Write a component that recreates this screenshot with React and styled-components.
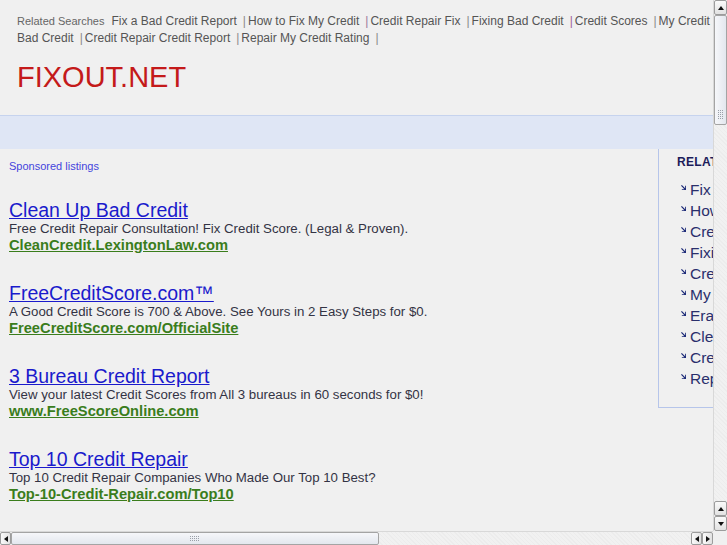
import styled, { createGlobalStyle } from "styled-components";

const GlobalStyle = createGlobalStyle`
  html, body {
    margin: 0;
    padding: 0;
    overflow: hidden;
    background: #f0f0f0;
  }
`;

const RELATED = [
  { text: "Fix a Bad Credit Report", pipe: "#8a8a8a" },
  { text: "How to Fix My Credit", pipe: "#9a7a9a" },
  { text: "Credit Repair Fix", pipe: "#8a8a8a" },
  { text: "Fixing Bad Credit", pipe: "#a0609a" },
  { text: "Credit Scores", pipe: "#8a8a8a" },
  { text: "My Credit Report", pipe: "#8a8a8a" },
  { text: "Erase Bad Credit", pipe: "#8a8a8a" },
  { text: "Clean Up Bad Credit", pipe: "#8a8a8a" },
  { text: "Credit Repair Credit Report", pipe: "#8a8a8a" },
  { text: "Repair My Credit Rating", pipe: "#8a8a8a" },
];

const ADS = [
  {
    title: "Clean Up Bad Credit",
    desc: "Free Credit Repair Consultation! Fix Credit Score. (Legal & Proven).",
    url: "CleanCredit.LexingtonLaw.com",
  },
  {
    title: "FreeCreditScore.com™",
    desc: "A Good Credit Score is 700 & Above. See Yours in 2 Easy Steps for $0.",
    url: "FreeCreditScore.com/OfficialSite",
  },
  {
    title: "3 Bureau Credit Report",
    desc: "View your latest Credit Scores from All 3 bureaus in 60 seconds for $0!",
    url: "www.FreeScoreOnline.com",
  },
  {
    title: "Top 10 Credit Repair",
    desc: "Top 10 Credit Repair Companies Who Made Our Top 10 Best?",
    url: "Top-10-Credit-Repair.com/Top10",
  },
];

function Arrow({ dir }) {
  const pts = {
    up: "1,6 4,2 7,6",
    down: "1,2 4,6 7,2",
    left: "6,1 2,4 6,7",
    right: "2,1 6,4 2,7",
  }[dir];
  return (
    <svg width="8" height="8" viewBox="0 0 8 8">
      <polygon points={pts} fill="#111" />
    </svg>
  );
}

function Grip({ vertical }) {
  const dots = [];
  for (let r = 0; r < (vertical ? 5 : 3); r++) {
    for (let c = 0; c < (vertical ? 3 : 5); c++) {
      dots.push(<rect key={r + "-" + c} x={c * 2} y={r * 2} width="1" height="1" fill="#9a9fa8" />);
    }
  }
  return (
    <svg width={vertical ? 6 : 10} height={vertical ? 10 : 6}>
      {dots}
    </svg>
  );
}

export default function App() {
  return (
    <Frame>
      <GlobalStyle />
      <Viewport>
        <Page>
          <Header>
            <SearchLine>
              <SearchLabel>Related Searches</SearchLabel>
              {RELATED.map((r, i) => (
                <SearchItem key={i}>
                  <SearchLink>{r.text}</SearchLink>
                  <Pipe color={r.pipe}>|</Pipe>
                </SearchItem>
              ))}
            </SearchLine>
            <Logo>FIXOUT.NET</Logo>
          </Header>
          <Band />
          <Main>
            <Listings>
              <Sponsored>Sponsored listings</Sponsored>
              {ADS.map((ad, i) => (
                <Ad key={i}>
                  <AdTitle>{ad.title}</AdTitle>
                  <AdDesc>{ad.desc}</AdDesc>
                  <AdUrl>{ad.url}</AdUrl>
                </Ad>
              ))}
            </Listings>
            <Sidebar>
              <SideHeading>RELATED SEARCHES</SideHeading>
              <SideList>
                {RELATED.map((r, i) => (
                  <SideItem key={i}>
                    <SideIcon viewBox="0 0 6 6">
                      <polygon points="0,1 1,0 5,4 5,1 6,1 6,6 1,6 1,5 4,5" fill="#1c2a78" />
                    </SideIcon>
                    <SideLink>{r.text}</SideLink>
                  </SideItem>
                ))}
              </SideList>
            </Sidebar>
          </Main>
        </Page>
      </Viewport>

      <VScroll>
        <VButton>
          <Arrow dir="up" />
        </VButton>
        <VThumb>
          <Grip vertical />
        </VThumb>
        <Track />
        <VButton>
          <Arrow dir="up" />
        </VButton>
        <VButton>
          <Arrow dir="down" />
        </VButton>
      </VScroll>

      <HScroll>
        <HButton>
          <Arrow dir="left" />
        </HButton>
        <HThumb>
          <Grip />
        </HThumb>
        <Track />
        <HButton>
          <Arrow dir="left" />
        </HButton>
        <HButton>
          <Arrow dir="right" />
        </HButton>
      </HScroll>
      <Corner />
    </Frame>
  );
}

const Frame = styled.div`
  width: 727px;
  height: 545px;
  display: grid;
  grid-template-columns: 713px 14px;
  grid-template-rows: 531px 14px;
  background: #f0f0f0;
  font-family: "Liberation Sans", Arial, sans-serif;
`;

const Viewport = styled.div`
  overflow: hidden;
`;

const Page = styled.div`
  width: 960px;
`;

const Header = styled.div`
  padding: 13px 0 0 17px;
  height: 115px;
  box-sizing: border-box;
`;

const SearchLine = styled.div`
  width: 905px;
  font-size: 12px;
  line-height: 17px;
  color: #555555;
`;

const SearchLabel = styled.span`
  font-size: 11px;
  color: #666666;
  margin-right: 7px;
`;

const SearchItem = styled.span``;

const SearchLink = styled.a`
  color: #555555;
  text-decoration: none;
`;

const Pipe = styled.span`
  color: ${(p) => p.color};
  margin: 0 2px 0 6px;
`;

const Logo = styled.h1`
  margin: 14px 0 0 0;
  font-size: 29px;
  line-height: 32px;
  font-weight: 400;
  color: #c41a1a;
`;

const Band = styled.div`
  height: 33px;
  background: #dfe6f5;
  border-top: 1px solid #c6d3ee;
`;

const Main = styled.div`
  display: flex;
  align-items: flex-start;
`;

const Listings = styled.div`
  width: 658px;
  padding: 10px 0 0 9px;
  box-sizing: border-box;
`;

const Sponsored = styled.div`
  font-size: 11px;
  line-height: 14px;
  color: #4444dd;
  margin-bottom: 27px;
`;

const Ad = styled.div`
  margin-bottom: 29px;
`;

const AdTitle = styled.a`
  display: block;
  font-size: 19.5px;
  line-height: 20px;
  color: #1a1acc;
  text-decoration: underline;
`;

const AdDesc = styled.div`
  font-size: 13.25px;
  line-height: 17px;
  color: #333344;
`;

const AdUrl = styled.a`
  display: block;
  font-size: 14.7px;
  line-height: 17px;
  font-weight: 700;
  color: #3a7d1c;
  text-decoration: underline;
`;

const Sidebar = styled.div`
  width: 260px;
  height: 259px;
  box-sizing: border-box;
  border-left: 1px solid #b6c5ea;
  border-bottom: 1px solid #b6c5ea;
  padding: 6px 0 0 18px;
`;

const SideHeading = styled.div`
  font-size: 12px;
  font-weight: 700;
  line-height: 14px;
  color: #1c1c5a;
  letter-spacing: 0.3px;
`;

const SideList = styled.ul`
  list-style: none;
  margin: 10px 0 0 0;
  padding: 0 0 0 4px;
`;

const SideItem = styled.li`
  display: flex;
  align-items: center;
  height: 21px;
`;

const SideIcon = styled.svg`
  width: 5px;
  height: 5px;
  margin-right: 4px;
  margin-top: -5px;
`;

const SideLink = styled.a`
  font-size: 15.5px;
  color: #2a2f6c;
  text-decoration: none;
  white-space: nowrap;
`;

const VScroll = styled.div`
  display: flex;
  flex-direction: column;
  background: #f3f3f3;
  border-left: 1px solid #d8d8d8;
  box-sizing: border-box;
`;

const HScroll = styled.div`
  display: flex;
  flex-direction: row;
  background: #f3f3f3;
  border-top: 1px solid #d8d8d8;
  box-sizing: border-box;
`;

const Corner = styled.div`
  background: #f0f0f0;
`;

const Track = styled.div`
  flex: 1;
  background: repeating-linear-gradient(45deg, #f1f1f1 0 2px, #ececec 2px 3px);
`;

const VButton = styled.div`
  height: 13px;
  display: flex;
  align-items: center;
  justify-content: center;
  border: 1px solid #9c9c9c;
  border-radius: 2px;
  background: linear-gradient(#fafafa, #e2e2e2);
`;

const HButton = styled.div`
  width: 9px;
  display: flex;
  align-items: center;
  justify-content: center;
  border: 1px solid #9c9c9c;
  border-radius: 2px;
  background: linear-gradient(90deg, #fafafa, #e2e2e2);
`;

const VThumb = styled.div`
  height: 110px;
  display: flex;
  align-items: flex-end;
  justify-content: center;
  padding-bottom: 4px;
  box-sizing: border-box;
  border: 1px solid #a4a4a4;
  border-radius: 2px;
  background: linear-gradient(90deg, #f6f7fa, #e3e7ee);
`;

const HThumb = styled.div`
  width: 368px;
  display: flex;
  align-items: center;
  justify-content: center;
  box-sizing: border-box;
  border: 1px solid #a4a4a4;
  border-radius: 2px;
  background: linear-gradient(#f6f7fa, #e3e7ee);
`;
